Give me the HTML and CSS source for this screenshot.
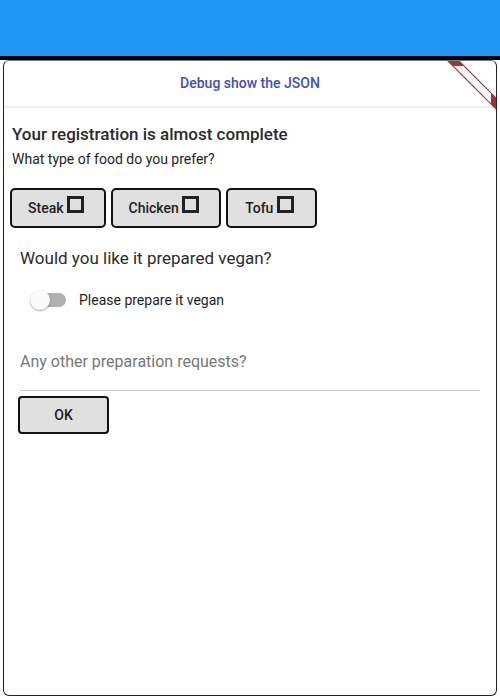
FILE: index.html
```html
<!DOCTYPE html>
<html>
<head>
<meta charset="utf-8">
<link rel="stylesheet" href="styles.css">
</head>
<body>
<div class="appbar"></div>
<div class="shadowbar"></div>
<div class="card">
  <div class="debug-row">Debug show the JSON</div>
  <div class="content">
    <h1 class="title">Your registration is almost complete</h1>
    <p class="subtitle">What type of food do you prefer?</p>
    <div class="choices">
      <button class="choice">Steak<span class="icon"><span class="box"></span></span></button>
      <button class="choice">Chicken<span class="icon"><span class="box"></span></span></button>
      <button class="choice">Tofu<span class="icon"><span class="box"></span></span></button>
    </div>
    <div class="section">
      <div class="question">Would you like it prepared vegan?</div>
      <div class="switch-row">
        <span class="switch"><span class="track"></span><span class="thumb"></span></span>
        <span class="switch-label">Please prepare it vegan</span>
      </div>
      <div class="field">Any other preparation requests?</div>
    </div>
    <button class="ok">OK</button>
  </div>
  <svg class="banner" width="60" height="60" viewBox="0 0 60 60">
    <polygon points="10,0 21,0 60,39 60,50" fill="#fff"/>
    <line x1="15.5" y1="0" x2="60" y2="44.5" stroke="#e6e6e6" stroke-width="1"/>
    <line x1="10" y1="0" x2="60" y2="50" stroke="#a33" stroke-width="1.2"/>
    <line x1="21" y1="0" x2="60" y2="39" stroke="#a33" stroke-width="1.2"/>
    <polygon points="10,0 21,0 27,6 16,6" fill="#9e3535"/>
    <polygon points="54,33 60,39 60,50 54,44" fill="#9e3535"/>
  </svg>
</div>
</body>
</html>
```
FILE: styles.css
```css
html, body {
  margin: 0;
  padding: 0;
  background: #fff;
  width: 500px;
  height: 700px;
  overflow: hidden;
  font-family: Roboto, "Liberation Sans", sans-serif;
}
.appbar {
  height: 56px;
  background: #2196f3;
}
.shadowbar {
  height: 4px;
  background: #000;
}
.card {
  position: relative;
  margin: 0 3px;
  height: 636px;
  box-sizing: border-box;
  border: 1px solid #222;
  border-top-color: #777;
  border-radius: 6px;
  overflow: hidden;
}
.debug-row {
  height: 45px;
  line-height: 45px;
  text-align: center;
  font-size: 14px;
  font-weight: 500;
  color: #3f51b5;
  border-bottom: 2px solid #eee;
}
.content {
  padding: 15px 8px 0 8px;
}
.title {
  margin: 0;
  font-size: 17px;
  font-weight: 500;
  color: #2b2b2b;
  line-height: 22px;
}
.subtitle {
  margin: 5px 0 0 0;
  font-size: 14px;
  color: #1e1e1e;
  line-height: 18px;
}
.choices {
  display: flex;
  gap: 5px;
  margin-top: 20px;
  margin-left: -2px;
}
.choice {
  display: flex;
  align-items: center;
  justify-content: center;
  min-width: 91px;
  height: 40px;
  padding: 0 16px;
  border: 2px solid #111;
  border-radius: 5px;
  background: #e0e0e0;
  font-family: Roboto, "Liberation Sans", sans-serif;
  font-size: 14px;
  font-weight: 500;
  color: #1e1e1e;
}
.icon {
  display: flex;
  align-items: center;
  justify-content: center;
  width: 24px;
  height: 24px;
  margin-top: -7px;
}
.box {
  display: block;
  box-sizing: border-box;
  width: 17px;
  height: 17px;
  border: 3px solid #222;
}
.section {
  padding: 0 8px;
}
.question {
  margin-top: 19px;
  font-size: 17px;
  color: #2b2b2b;
  line-height: 22px;
}
.switch-row {
  display: flex;
  align-items: center;
  margin-top: 21px;
  height: 20px;
}
.switch {
  position: relative;
  width: 36px;
  height: 20px;
  margin-left: 10px;
}
.track {
  position: absolute;
  left: 2px;
  top: 3px;
  width: 34px;
  height: 14px;
  border-radius: 7px;
  background: #b0b0b0;
}
.thumb {
  position: absolute;
  left: 0;
  top: 0;
  width: 20px;
  height: 20px;
  border-radius: 50%;
  background: #fafafa;
  box-shadow: 0 1px 2px rgba(0,0,0,0.35);
}
.switch-label {
  margin-left: 13px;
  font-size: 14px;
  color: #1e1e1e;
}
.field {
  margin-top: 41px;
  font-size: 16px;
  color: #777;
  line-height: 22px;
  padding-bottom: 17px;
  border-bottom: 1px solid #ccc;
}
.ok {
  display: block;
  margin-top: 5px;
  margin-left: 6px;
  width: 91px;
  height: 38px;
  border: 2px solid #111;
  border-radius: 4px;
  background: #e0e0e0;
  font-family: Roboto, "Liberation Sans", sans-serif;
  font-size: 14px;
  font-weight: 500;
  color: #1e1e1e;
}
.banner {
  position: absolute;
  right: -1px;
  top: -1px;
}
```
